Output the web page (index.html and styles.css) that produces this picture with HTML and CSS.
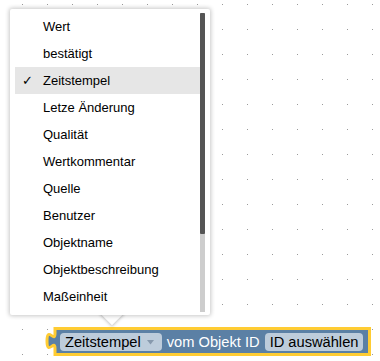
FILE: index.html
```html
<!DOCTYPE html>
<html>
<head>
<meta charset="utf-8">
<link rel="stylesheet" href="styles.css">
</head>
<body>
<div class="workspace">
  <svg class="grid" width="380" height="361" xmlns="http://www.w3.org/2000/svg">
    <defs>
      <pattern id="dots" x="22" y="4" width="25" height="25" patternUnits="userSpaceOnUse">
        <rect width="1" height="1" fill="#9a9a9a"/>
      </pattern>
    </defs>
    <rect width="380" height="361" fill="url(#dots)"/>
  </svg>

  <div class="block">
    <svg class="block-shape" width="328" height="31" viewBox="0 0 328 31" xmlns="http://www.w3.org/2000/svg">
      <path d="M11,2.5 H325.5 V28.5 H11 V22.5 C11,12.5 3,30.5 3,15 C3,-0.5 11,17.5 11,7.5 Z" fill="#5b80a5" stroke="#fc3" stroke-width="3" stroke-linejoin="miter"/>
    </svg>
    <div class="block-row">
      <div class="field field-dropdown">
        <span class="field-text">Zeitstempel</span>
        <svg class="caret" width="7" height="5" viewBox="0 0 7 5" xmlns="http://www.w3.org/2000/svg"><polygon points="0,0 7,0 3.5,4.5" fill="#8799ad"/></svg>
      </div>
      <span class="block-label">vom Objekt ID</span>
      <div class="field"><span class="field-text">ID auswählen</span></div>
    </div>
  </div>

  <div class="dd-arrow"></div>
  <div class="dropdown">
    <ul class="menu">
      <li class="menu-item"><span class="check"></span>Wert</li>
      <li class="menu-item"><span class="check"></span>bestätigt</li>
      <li class="menu-item selected"><span class="check">✓</span>Zeitstempel</li>
      <li class="menu-item"><span class="check"></span>Letze Änderung</li>
      <li class="menu-item"><span class="check"></span>Qualität</li>
      <li class="menu-item"><span class="check"></span>Wertkommentar</li>
      <li class="menu-item"><span class="check"></span>Quelle</li>
      <li class="menu-item"><span class="check"></span>Benutzer</li>
      <li class="menu-item"><span class="check"></span>Objektname</li>
      <li class="menu-item"><span class="check"></span>Objektbeschreibung</li>
      <li class="menu-item"><span class="check"></span>Maßeinheit</li>
    </ul>
    <div class="scrollbar"><div class="thumb"></div></div>
  </div>
</div>
</body>
</html>
```

FILE: styles.css
```css
html, body {
  margin: 0;
  padding: 0;
  background: #ffffff;
}

.workspace {
  position: relative;
  width: 380px;
  height: 361px;
  overflow: hidden;
  background: #ffffff;
  font-family: "Liberation Sans", Arial, sans-serif;
}

.grid {
  position: absolute;
  left: 0;
  top: 0;
}

/* Block on the canvas */
.block {
  position: absolute;
  left: 44px;
  top: 326px;
  width: 328px;
  height: 31px;
}

.block-shape {
  position: absolute;
  left: 0;
  top: 0;
}

.block-row {
  position: relative;
  display: flex;
  align-items: center;
  gap: 5px;
  height: 31px;
  padding-left: 16px;
  font-size: 14.667px;
}

.field {
  display: flex;
  align-items: center;
  height: 18px;
  padding: 0 5px;
  background: #bdccdb;
  border-radius: 4px;
  color: #000;
  line-height: 18px;
}

.field-dropdown {
  padding-right: 8px;
}

.caret {
  margin-left: 6px;
  margin-top: 1px;
}

.block-label {
  color: #ffffff;
  line-height: 18px;
}

/* Dropdown */
.dd-arrow {
  position: absolute;
  left: 104px;
  top: 306px;
  width: 16px;
  height: 16px;
  background: #ffffff;
  transform: rotate(45deg);
  box-shadow: 0 0 3px 1px rgba(0, 0, 0, 0.22);
}

.dropdown {
  position: absolute;
  left: 10px;
  top: 9px;
  width: 200px;
  height: 306px;
  box-sizing: border-box;
  padding: 4px 5px 3px 5px;
  background: #ffffff;
  border-radius: 2px;
  box-shadow: 0 0 4px 1px rgba(0, 0, 0, 0.22);
  display: flex;
}

.menu {
  list-style: none;
  margin: 0;
  padding: 0;
  width: 185px;
  height: 299px;
  overflow: hidden;
}

.menu-item {
  display: flex;
  align-items: center;
  height: 27px;
  padding-left: 7px;
  font-size: 13px;
  line-height: 15px;
  color: #000;
  white-space: nowrap;
}

.menu-item.selected {
  background: #e6e6e6;
}

.check {
  width: 21px;
  flex: none;
  font-family: "DejaVu Sans", sans-serif;
  font-size: 13px;
}

.scrollbar {
  width: 5px;
  height: 299px;
  background: #cdcdcd;
  flex: none;
}

.thumb {
  height: 221px;
  background: #555555;
  border-radius: 1px;
}
```
